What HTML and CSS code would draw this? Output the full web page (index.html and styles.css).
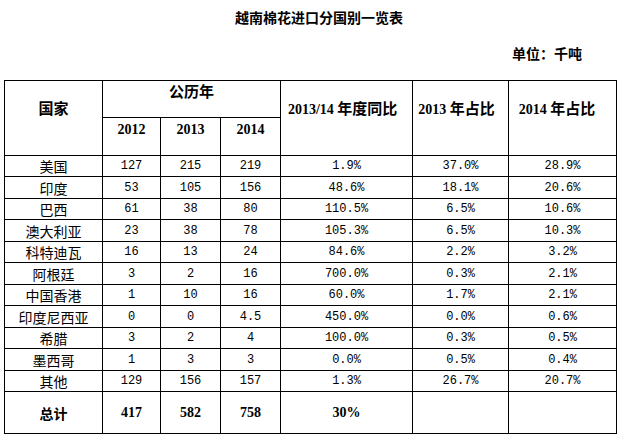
FILE: index.html
```html
<!DOCTYPE html>
<html lang="zh-CN">
<head>
<meta charset="utf-8">
<title>越南棉花进口分国别一览表</title>
<link rel="stylesheet" href="styles.css">
</head>
<body>
<div class="page">
  <h1 class="title">越南棉花进口分国别一览表</h1>
  <div class="unit">单位：千吨</div>
  <table class="grid">
    <colgroup>
      <col class="c-country"><col class="c-y1"><col class="c-y2"><col class="c-y3"><col class="c-yoy"><col class="c-s13"><col class="c-s14">
    </colgroup>
    <thead>
      <tr class="h1">
        <th rowspan="2" class="hs">国家</th>
        <th colspan="3" class="hyear">公历年</th>
        <th rowspan="2" class="hs hr"><span class="num">2013/14</span> 年度同比</th>
        <th rowspan="2" class="hs hr"><span class="num">2013</span> 年占比</th>
        <th rowspan="2" class="hs hr2"><span class="num">2014</span> 年占比</th>
      </tr>
      <tr class="h2">
        <th class="num">2012</th>
        <th class="num">2013</th>
        <th class="num">2014</th>
      </tr>
    </thead>
    <tbody>
      <tr><td class="cn">美国</td><td>127</td><td>215</td><td>219</td><td>1.9%</td><td>37.0%</td><td>28.9%</td></tr>
      <tr><td class="cn">印度</td><td>53</td><td>105</td><td>156</td><td>48.6%</td><td>18.1%</td><td>20.6%</td></tr>
      <tr><td class="cn">巴西</td><td>61</td><td>38</td><td>80</td><td>110.5%</td><td>6.5%</td><td>10.6%</td></tr>
      <tr><td class="cn">澳大利亚</td><td>23</td><td>38</td><td>78</td><td>105.3%</td><td>6.5%</td><td>10.3%</td></tr>
      <tr><td class="cn">科特迪瓦</td><td>16</td><td>13</td><td>24</td><td>84.6%</td><td>2.2%</td><td>3.2%</td></tr>
      <tr><td class="cn">阿根廷</td><td>3</td><td>2</td><td>16</td><td>700.0%</td><td>0.3%</td><td>2.1%</td></tr>
      <tr><td class="cn">中国香港</td><td>1</td><td>10</td><td>16</td><td>60.0%</td><td>1.7%</td><td>2.1%</td></tr>
      <tr><td class="cn">印度尼西亚</td><td>0</td><td>0</td><td>4.5</td><td>450.0%</td><td>0.0%</td><td>0.6%</td></tr>
      <tr><td class="cn">希腊</td><td>3</td><td>2</td><td>4</td><td>100.0%</td><td>0.3%</td><td>0.5%</td></tr>
      <tr><td class="cn">墨西哥</td><td>1</td><td>3</td><td>3</td><td>0.0%</td><td>0.5%</td><td>0.4%</td></tr>
      <tr><td class="cn">其他</td><td>129</td><td>156</td><td>157</td><td>1.3%</td><td>26.7%</td><td>20.7%</td></tr>
      <tr class="total"><td class="cn">总计</td><td>417</td><td>582</td><td>758</td><td>30%</td><td></td><td></td></tr>
    </tbody>
  </table>
</div>
</body>
</html>
```
FILE: styles.css
```css
html, body {
  margin: 0;
  padding: 0;
  background: #fff;
  color: #000;
}
.page {
  width: 620px;
  font-family: "Noto Sans CJK SC", sans-serif;
}
.title {
  margin: 0;
  padding: 8px 0 0 18px;
  height: 22px;
  text-align: center;
  font-size: 14px;
  line-height: 18px;
  font-weight: 700;
}
.unit {
  padding: 14px 0 0 512px;
  height: 20px;
  font-size: 14px;
  line-height: 18px;
  font-weight: 700;
}
.grid {
  margin: 16px 0 0 4px;
  width: 613px;
  border-collapse: collapse;
  table-layout: fixed;
}
.c-country { width: 98px; }
.c-y1 { width: 58px; }
.c-y2 { width: 60px; }
.c-y3 { width: 60px; }
.c-yoy { width: 132px; }
.c-s13 { width: 96px; }
.c-s14 { width: 108px; }
.grid th, .grid td {
  border: 1px solid #000;
  padding: 0;
  text-align: center;
}
.grid th {
  font-size: 15px;
  font-weight: 700;
  line-height: 18px;
  vertical-align: top;
}
.grid .num {
  font-family: "Liberation Serif", serif;
  font-size: 14px;
  font-weight: 700;
}
.grid .h1 { height: 37px; }
.grid .h2 { height: 38px; }
.grid th.hs { padding-top: 18px; }
.grid th.hr { padding-right: 8px; }
.grid th.hr2 { padding-right: 11px; }
.grid th.hyear { padding-top: 1px; }
.grid .h2 th { padding-top: 3px; }
.grid td {
  font-family: "Liberation Mono", monospace;
  font-size: 12px;
  line-height: 16px;
  vertical-align: middle;
}
.grid td.cn {
  font-family: "Noto Sans CJK SC", sans-serif;
  font-size: 14px;
  font-weight: 400;
}
.grid tbody tr { height: 21px; }
.grid tbody tr:nth-child(even) { height: 22px; }
.grid tbody tr.total { height: 42px; }
.grid tr.total td {
  font-family: "Liberation Serif", serif;
  font-size: 14px;
  font-weight: 700;
}
.grid tr.total td.cn {
  font-family: "Noto Sans CJK SC", sans-serif;
  font-weight: 700;
}
```
